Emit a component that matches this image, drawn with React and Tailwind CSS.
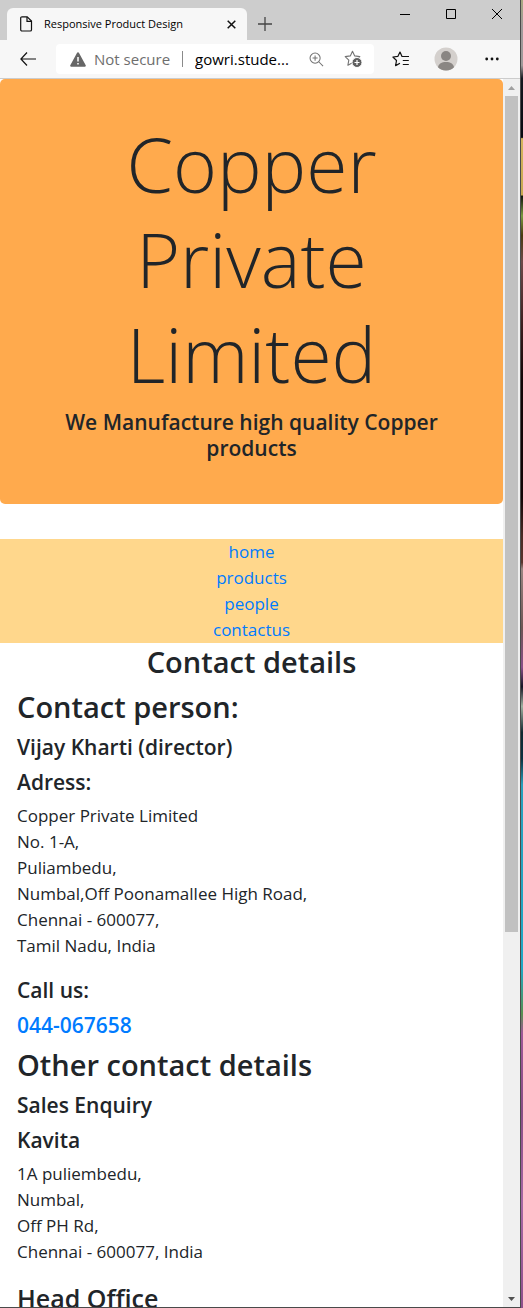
import React from "react";

const navLinks = ["home", "products", "people", "contactus"];
const officeAddress = [
  "Copper Private Limited",
  "No. 1-A,",
  "Puliambedu,",
  "Numbal,Off Poonamallee High Road,",
  "Chennai - 600077,",
  "Tamil Nadu, India",
];
const salesAddress = ["1A puliembedu,", "Numbal,", "Off PH Rd,", "Chennai - 600077, India"];

function TabStrip() {
  return (
    <div className="flex h-10 shrink-0 items-end bg-[#cdcdcd] pl-[7px]">
      <div className="flex h-8 w-60 items-center rounded-t-md bg-[#f7f7f7] pr-2 pl-3">
        <svg className="shrink-0" width="14" height="16" viewBox="0 0 14 16" fill="none" stroke="#111" strokeWidth="1.2">
          <path d="M3 .8h5.2l4.3 4.3v8.6a1.3 1.3 0 0 1-1.3 1.3H3a1.3 1.3 0 0 1-1.3-1.3V2.1A1.3 1.3 0 0 1 3 .8z" />
          <path d="M8 1v4.3h4.3" />
        </svg>
        <span className="ml-[11px] flex-1 truncate text-[11px] text-black">Responsive Product Design</span>
        <button type="button" aria-label="Close tab" className="flex size-4 items-center justify-center">
          <svg width="9" height="9" viewBox="0 0 9 9" stroke="#111" strokeWidth="1.5">
            <path d="M.7.7l7.600 7.600M8.300.7L.7 8.300" />
          </svg>
        </button>
      </div>
      <button type="button" aria-label="New tab" className="ml-2.5 flex h-8 w-4 items-center justify-center">
        <svg width="14" height="14" viewBox="0 0 14 14" stroke="#444" strokeWidth="1.3">
          <path d="M7 0v14M0 7h14" />
        </svg>
      </button>
      <div className="ml-auto flex h-10 items-start">
        <button type="button" aria-label="Minimize" className="flex h-7 w-[46px] items-center justify-center">
          <svg width="10" height="10" viewBox="0 0 10 10" stroke="#000">
            <path d="M0 5.5h10" />
          </svg>
        </button>
        <button type="button" aria-label="Maximize" className="flex h-7 w-[46px] items-center justify-center">
          <svg width="10" height="10" viewBox="0 0 10 10" fill="none" stroke="#000">
            <path d="M.5.5h9v9h-9z" />
          </svg>
        </button>
        <button type="button" aria-label="Close window" className="flex h-7 w-[46px] items-center justify-center">
          <svg width="10" height="10" viewBox="0 0 10 10" stroke="#000">
            <path d="M0 0l10 10M10 0L0 10" />
          </svg>
        </button>
      </div>
    </div>
  );
}

function Toolbar() {
  return (
    <div className="flex h-[39px] shrink-0 items-center border-b border-[#cccccc] bg-[#f7f7f7] pr-4">
      <button type="button" aria-label="Back" className="flex w-14 items-center justify-center">
        <svg width="16" height="14" viewBox="0 0 16 14" fill="none" stroke="#111" strokeWidth="1.2">
          <path d="M7 .5L.9 7 7 13.5M1 7h15" />
        </svg>
      </button>
      <div className="flex h-[30px] min-w-0 flex-1 items-center rounded bg-white pr-3 pl-3.5 text-[15px]">
        <svg className="shrink-0" width="16" height="15" viewBox="0 0 16 15">
          <path d="M8 .3a1 1 0 0 1 .9.5l6.8 12.4a1 1 0 0 1-.9 1.5H1.200a1 1 0 0 1-.9-1.500L7.100.8A1 1 0 0 1 8 .3z" fill="#666" />
          <path d="M8 5v4.500M8 11v1.600" stroke="#fff" strokeWidth="1.500" />
        </svg>
        <span className="ml-2 shrink-0 text-[#6e6e6e]">Not secure</span>
        <span className="mx-3 h-4 w-px shrink-0 bg-[#8a8a8a]" />
        <input
          type="text"
          readOnly
          aria-label="Address"
          defaultValue="gowri.stude..."
          className="w-0 min-w-0 flex-1 bg-transparent text-black outline-none"
        />
        <button type="button" aria-label="Zoom" className="ml-3 shrink-0">
          <svg width="15" height="15" viewBox="0 0 16 16" fill="none" stroke="#737373" strokeWidth="1.100">
            <circle cx="6.500" cy="6.500" r="5.400" />
            <path d="M10.400 10.400l4.600 4.600M6.500 3.800v5.400M3.800 6.500h5.400" />
          </svg>
        </button>
        <button type="button" aria-label="Add to favorites" className="ml-5 shrink-0">
          <svg width="18" height="18" viewBox="0 0 18 18" fill="none">
            <path
              d="M8.500 1.200l2.200 4.700 5.100.7-3.600 3.500.9 5.100-4.600-2.400-4.600 2.400.9-5.100L1.200 6.600l5.100-.7z"
              stroke="#737373"
              strokeWidth="1.100"
              strokeLinejoin="round"
            />
            <circle cx="13" cy="12.500" r="5" fill="#5f5f5f" stroke="#fff" />
            <path d="M13 10v5M10.500 12.500h5" stroke="#fff" strokeWidth="1.200" />
          </svg>
        </button>
      </div>
      <button type="button" aria-label="Favorites" className="ml-[18px] shrink-0">
        <svg width="18" height="16" viewBox="0 0 18 16" fill="none" stroke="#111" strokeWidth="1.200" strokeLinejoin="round">
          <path d="M15.500 5.500H10L8 1 5.800 5.400.9 6l3.600 3.500-.9 5.100L8 12.300" />
          <path d="M10 5.500h7M10.800 9.500h6M10.800 13.500h6" />
        </svg>
      </button>
      <button type="button" aria-label="Profile" className="ml-6 shrink-0">
        <svg width="24" height="24" viewBox="0 0 24 24">
          <circle cx="12" cy="12" r="11.500" fill="#d4d0cd" />
          <circle cx="12" cy="9" r="5" fill="#8a8683" />
          <path d="M4 20.200c.6-3.300 3.700-5.200 8-5.200s7.400 1.900 8 5.200a11.500 11.500 0 0 1-16 0z" fill="#8a8683" />
        </svg>
      </button>
      <button type="button" aria-label="Settings and more" className="ml-[22px] flex w-6 shrink-0 justify-center">
        <svg width="14" height="4" viewBox="0 0 14 4" fill="#111">
          <circle cx="1.700" cy="2" r="1.400" />
          <circle cx="7" cy="2" r="1.400" />
          <circle cx="12.300" cy="2" r="1.400" />
        </svg>
      </button>
    </div>
  );
}

function Scrollbar() {
  return (
    <div aria-hidden="true" className="flex w-[17px] shrink-0 flex-col items-center bg-[#f0f0f0]">
      <div className="flex h-[17px] shrink-0 items-center">
        <svg width="7" height="4" viewBox="0 0 7 4" fill="#a0a0a0">
          <path d="M3.500 0L7 4H0z" />
        </svg>
      </div>
      <div className="flex w-[13px] flex-1 flex-col">
        <div className="h-[70%] bg-[#c1c1c1]" />
      </div>
      <div className="flex h-[17px] shrink-0 items-center">
        <svg width="7" height="4" viewBox="0 0 7 4" fill="#505050">
          <path d="M3.500 4L7 0H0z" />
        </svg>
      </div>
    </div>
  );
}

function Title({ children, center }) {
  return (
    <h2 className={center ? "mb-2 pt-px text-center text-[29px] leading-9 font-semibold" : "mb-2 pt-px text-[29px] leading-9 font-semibold"}>
      {children}
    </h2>
  );
}

function Subtitle({ children }) {
  return <h4 className="mb-2 pt-px text-[21px] leading-[26px] font-semibold">{children}</h4>;
}

function Address({ lines }) {
  return (
    <address className="mb-[17px] text-[17px] leading-[26px] not-italic">
      {lines.map((line) => (
        <div key={line}>{line}</div>
      ))}
    </address>
  );
}

function ContactPage() {
  return (
    <main className="min-w-0 flex-1 overflow-hidden bg-white text-[#212529]">
      <header className="mb-[35px] rounded-[5px] bg-[#ffaa4d] px-12 pt-[38px] pb-[35px] text-center">
        <h1 className="mb-1.5 px-10 text-[75px] leading-[95px] font-light">Copper Private Limited</h1>
        <Subtitle>We Manufacture high quality Copper products</Subtitle>
      </header>
      <nav className="flex flex-col items-center bg-[#ffd78c] text-[17px] leading-[26px] text-[#007bff]">
        {navLinks.map((name) => (
          <a key={name} href={"#" + name}>
            {name}
          </a>
        ))}
      </nav>
      <Title center>Contact details</Title>
      <section className="px-[17px]">
        <Title>Contact person:</Title>
        <Subtitle>Vijay Kharti (director)</Subtitle>
        <Subtitle>Adress:</Subtitle>
        <Address lines={officeAddress} />
        <Subtitle>Call us:</Subtitle>
        <Subtitle>
          <a href="tel:044-067658" className="text-[#007bff]">
            044-067658
          </a>
        </Subtitle>
        <Title>Other contact details</Title>
        <Subtitle>Sales Enquiry</Subtitle>
        <Subtitle>Kavita</Subtitle>
        <Address lines={salesAddress} />
        <h3 className="text-[25px] leading-8 font-semibold">Head Office</h3>
      </section>
    </main>
  );
}

export default function App() {
  return (
    <div className="flex h-screen overflow-hidden font-['Open_Sans','Noto_Sans',sans-serif]">
      <div className="flex min-w-0 flex-1 flex-col border-r border-b border-[#4a4a4a]">
        <TabStrip />
        <Toolbar />
        <div className="flex min-h-0 flex-1">
          <ContactPage />
          <Scrollbar />
        </div>
      </div>
      <div
        aria-hidden="true"
        className="w-0.5 shrink-0 bg-[linear-gradient(to_bottom,#a8a880_0%,#a09a9a_2%,#a09a9a_5%,#14181f_6%,#08090f_10.5%,#d4b45e_10.6%,#c8a850_14.9%,#10140a_15%,#7a9a40_16.5%,#4a3a10_18%,#6e4a48_20%,#5a3838_22%,#3a1c1c_25%,#120406_29%,#120406_38%,#4a2a24_41%,#5a342c_43%,#9a8480_43.5%,#6e5654_48%,#8a5088_51%,#141424_52.5%,#a0b0a0_54%,#102830_56%,#0a3040_58%,#28a0bc_60%,#20a8c4_74%,#5a9050_77.500%,#a05898_79%,#8a4e86_85%,#a868a4_92%,#90508c_100%)]"
      />
    </div>
  );
}
